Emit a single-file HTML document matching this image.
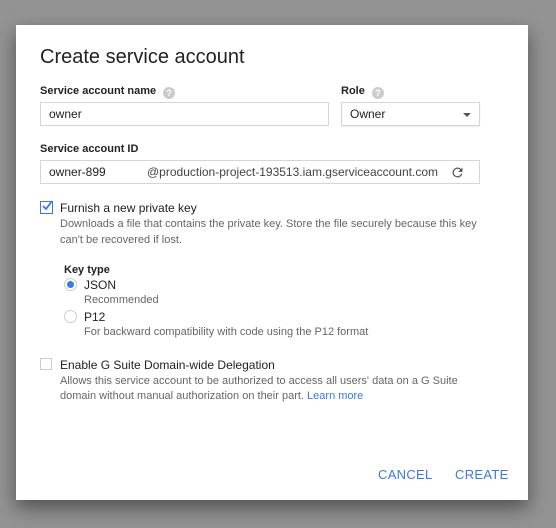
<!DOCTYPE html>
<html><head><style>
body{margin:0;width:556px;height:528px;background:#939393;font-family:"Liberation Sans",Arial,sans-serif;position:relative;overflow:hidden}
.d{position:absolute;left:16px;top:25px;width:512px;height:475px;background:#fff;box-shadow:0 8px 18px rgba(0,0,0,.45)}
.a{position:absolute;white-space:nowrap}
.lbl{font-size:11px;font-weight:bold;color:#222}
.inp{position:absolute;border:1px solid #d5d5d5;box-sizing:border-box;font-size:12px;color:#222;padding-left:8px;line-height:22px}
.s{font-size:11px;color:#666}
.q{display:inline-block;width:12px;height:12px;border-radius:50%;background:#ccc;color:#fff;font-size:9px;text-align:center;line-height:12px;vertical-align:-2px;margin-left:7px}
.btn{font-size:13px;color:#3b78e7;letter-spacing:.3px}
</style></head><body>
<div class="d"></div>
<div class="a" style="left:40px;top:46px;font-size:20px;color:#222">Create service account</div>
<div class="a lbl" style="left:40px;top:85px">Service account name<span class="q">?</span></div>
<div class="a lbl" style="left:341px;top:85px">Role<span class="q">?</span></div>
<div class="inp" style="left:40px;top:102px;width:289px;height:24px">owner</div>
<div class="inp" style="left:341px;top:102px;width:139px;height:24px;box-shadow:0 1px 1px rgba(0,0,0,.08)">Owner<span style="position:absolute;right:8px;top:10px;border-left:4px solid transparent;border-right:4px solid transparent;border-top:4px solid #555"></span></div>
<div class="a lbl" style="left:40px;top:143px">Service account ID</div>
<div class="inp" style="left:40px;top:160px;width:440px;height:24px">owner-899<span style="position:absolute;left:106px;color:#444">@production-project-193513.iam.gserviceaccount.com</span>
<svg style="position:absolute;left:409px;top:4px" width="15" height="15" viewBox="0 0 24 24"><path fill="#555" d="M17.65 6.35A7.96 7.96 0 0 0 12 4a8 8 0 1 0 7.73 10h-2.08A6 6 0 1 1 12 6c1.66 0 3.14.69 4.22 1.78L13 11h7V4l-2.35 2.35z"/></svg></div>
<div class="a" style="left:40px;top:201px;width:11px;height:11px;border:1px solid #3b78e7"></div>
<svg class="a" style="left:41px;top:200px" width="13" height="12" viewBox="0 0 13 12"><path d="M2 6l3 3 6-8" fill="none" stroke="#3b78e7" stroke-width="1.8"/></svg>
<div class="a" style="left:60px;top:201px;font-size:12px;color:#222">Furnish a new private key</div>
<div class="a s" style="left:60px;top:218px">Downloads a file that contains the private key. Store the file securely because this key</div>
<div class="a s" style="left:60px;top:234px">can't be recovered if lost.</div>
<div class="a lbl" style="left:64px;top:264px">Key type</div>
<div class="a" style="left:64px;top:278px;width:11px;height:11px;border:1px solid #ccc;border-radius:50%"></div>
<div class="a" style="left:67px;top:281px;width:7px;height:7px;background:#3b78e7;border-radius:50%"></div>
<div class="a" style="left:84px;top:278px;font-size:12px;color:#222">JSON</div>
<div class="a s" style="left:84px;top:294px">Recommended</div>
<div class="a" style="left:64px;top:310px;width:11px;height:11px;border:1px solid #ccc;border-radius:50%"></div>
<div class="a" style="left:84px;top:310px;font-size:12px;color:#222">P12</div>
<div class="a s" style="left:84px;top:326px">For backward compatibility with code using the P12 format</div>
<div class="a" style="left:40px;top:358px;width:10px;height:10px;border:1px solid #ccc"></div>
<div class="a" style="left:60px;top:358px;font-size:12px;color:#222">Enable G Suite Domain-wide Delegation</div>
<div class="a s" style="left:60px;top:375px">Allows this service account to be authorized to access all users' data on a G Suite</div>
<div class="a s" style="left:60px;top:390px">domain without manual authorization on their part. <span style="color:#3b78e7">Learn more</span></div>
<div class="a btn" style="left:378px;top:467px">CANCEL</div>
<div class="a btn" style="left:455px;top:467px">CREATE</div>
</body></html>
